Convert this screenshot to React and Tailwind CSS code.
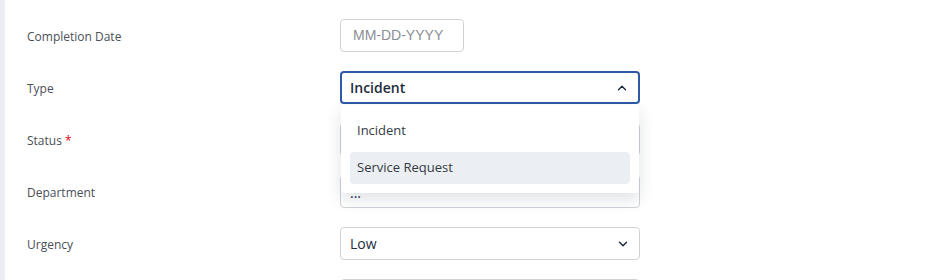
import { ChevronDown, ChevronUp } from "lucide-react";

const labelCls = "w-[313px] pt-[3px] text-[12px] font-medium text-[#4a4f57]";

function Row({ label, required, children }) {
    return (
        <div className="flex items-center h-[33px]">
            <div className={labelCls}>
                {label}
                {required && <span className="text-red-600"> *</span>}
            </div>
            {children}
        </div>
    );
}

function SelectBox({ value, open, bold }) {
    return (
        <div
            className={`relative flex items-center justify-between w-[300px] h-[33px] rounded-[4px] bg-white px-[9px] ${
                open ? "border-2 border-[#2c5aa8] pl-[8px]" : "border border-[#cfd3d8]"
            }`}
        >
            <span
                className={`text-[14px] text-[#1e2b3c] ${bold ? "font-semibold" : ""}`}
            >
                {value}
            </span>
            {open ? (
                <ChevronUp size={14} strokeWidth={2.5} className="text-[#1e2b3c]" />
            ) : (
                <ChevronDown size={14} strokeWidth={2.5} className="text-[#1e2b3c]" />
            )}
        </div>
    );
}

export default function App() {
    return (
        <div
            className="flex h-[280px] w-[948px] overflow-hidden bg-white"
            style={{ fontFamily: '"Open Sans", "Noto Sans", sans-serif' }}
        >
            <div className="w-[5px] bg-[#eceef4]" />
            <div className="relative flex-1 pl-[22px] pt-[19px] flex flex-col gap-[19px]">
                <Row label="Completion Date">
                    <div className="flex items-center w-[124px] h-[33px] rounded-[4px] border border-[#cfd3d8] px-[12px]">
                        <span
                            className="text-[14px] text-[#8a8f96]"
                            style={{ fontFamily: '"Liberation Sans", Arial, sans-serif' }}
                        >
                            MM-DD-YYYY
                        </span>
                    </div>
                </Row>
                <Row label="Type">
                    <div className="relative">
                        <SelectBox value="Incident" open bold />
                        <div className="absolute left-[1px] top-[34px] z-10 w-[298px] rounded-[4px] bg-white px-[9px] pt-[10px] pb-[9px] flex flex-col gap-[5px] shadow-[0_6px_16px_rgba(30,40,60,0.14)]">
                            <div className="flex items-center h-[32px] px-[7px] text-[13px] text-[#333a44]">
                                Incident
                            </div>
                            <div className="flex items-center h-[32px] px-[7px] rounded-[4px] bg-[#ebeef2] text-[13px] text-[#333a44]">
                                Service Request
                            </div>
                        </div>
                    </div>
                </Row>
                <Row label="Status" required>
                    <SelectBox value="" />
                </Row>
                <Row label="Department">
                    <div className="flex items-center w-[300px] h-[33px] rounded-[4px] border border-[#cfd3d8] px-[9px]">
                        <span className="text-[14px] text-[#1e2b3c] pt-[1px]">...</span>
                    </div>
                </Row>
                <Row label="Urgency">
                    <SelectBox value="Low" />
                </Row>
                <Row label="">
                    <SelectBox value="" />
                </Row>
            </div>
        </div>
    );
}
